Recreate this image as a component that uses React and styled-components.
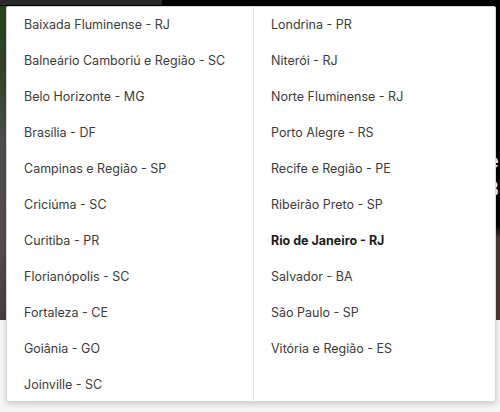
import React from "react";
import styled, { createGlobalStyle } from "styled-components";

const GlobalStyle = createGlobalStyle`
  html, body {
    margin: 0;
    padding: 0;
    background: #f6f6f6;
  }
  body {
    font-family: "Inter", "Noto Sans", sans-serif;
  }
`;

const Page = styled.div`
  position: relative;
  width: 500px;
  height: 412px;
  overflow: hidden;
`;

const TopBar = styled.header`
  height: 6px;
  display: flex;
  background: #000;

  & span {
    width: 162px;
    height: 5px;
    background: #2b2b2b;
  }
`;

const Hero = styled.section`
  height: 314px;
  display: grid;
  grid-template-columns: 1fr 1fr;
`;

const Photo = styled.div`
  background: linear-gradient(
    to bottom,
    #2c4420 0%,
    #34462a 22%,
    #4f5150 45%,
    #5a4c50 75%,
    #4a3d40 100%
  );
`;

const Panel = styled.div`
  display: flex;
  flex-direction: column;
  align-items: flex-end;
  padding-top: 141px;
  color: #fff;
  font-size: 20px;
  line-height: 28px;
  background: linear-gradient(
    to bottom,
    #000 0%,
    #050404 70%,
    #4a3b37 74%,
    #4b3a36 100%
  );

  & span {
    margin-right: 1px;
  }
`;

const Dropdown = styled.div`
  position: absolute;
  top: 6px;
  left: 6px;
  width: 490px;
  height: 396px;
  box-sizing: border-box;
  display: grid;
  grid-template-columns: 246px 1fr;
  background: #fff;
  border: 1px solid #d6d6d6;
  border-radius: 2px;
  box-shadow: 0 2px 6px rgba(0, 0, 0, 0.18);
  overflow: hidden;
`;

const Column = styled.ul`
  list-style: none;
  margin: -1px 0 0;
  padding: 0;

  & + & {
    border-left: 1px solid #e3e3e3;
  }
`;

const Option = styled.li`
  height: 36px;
  display: flex;
  align-items: center;
  padding-left: 17px;
  font-size: 12.5px;
  color: ${(p) => (p.$active ? "#1c1c1c" : "#3b3b3b")};
  font-weight: ${(p) => (p.$active ? 700 : 400)};
  white-space: nowrap;
`;

const left = [
  "Baixada Fluminense - RJ",
  "Balneário Camboriú e Região - SC",
  "Belo Horizonte - MG",
  "Brasília - DF",
  "Campinas e Região - SP",
  "Criciúma - SC",
  "Curitiba - PR",
  "Florianópolis - SC",
  "Fortaleza - CE",
  "Goiânia - GO",
  "Joinville - SC",
];

const right = [
  "Londrina - PR",
  "Niterói - RJ",
  "Norte Fluminense - RJ",
  "Porto Alegre - RS",
  "Recife e Região - PE",
  "Ribeirão Preto - SP",
  "Rio de Janeiro - RJ",
  "Salvador - BA",
  "São Paulo - SP",
  "Vitória e Região - ES",
];

const selected = "Rio de Janeiro - RJ";

export default function App() {
  return (
    <Page>
      <GlobalStyle />
      <TopBar>
        <span />
      </TopBar>
      <Hero>
        <Photo />
        <Panel>
          <span>e</span>
          <span>3</span>
        </Panel>
      </Hero>
      <Dropdown>
        <Column>
          {left.map((city) => (
            <Option key={city} $active={city === selected}>
              {city}
            </Option>
          ))}
        </Column>
        <Column>
          {right.map((city) => (
            <Option key={city} $active={city === selected}>
              {city}
            </Option>
          ))}
        </Column>
      </Dropdown>
    </Page>
  );
}
